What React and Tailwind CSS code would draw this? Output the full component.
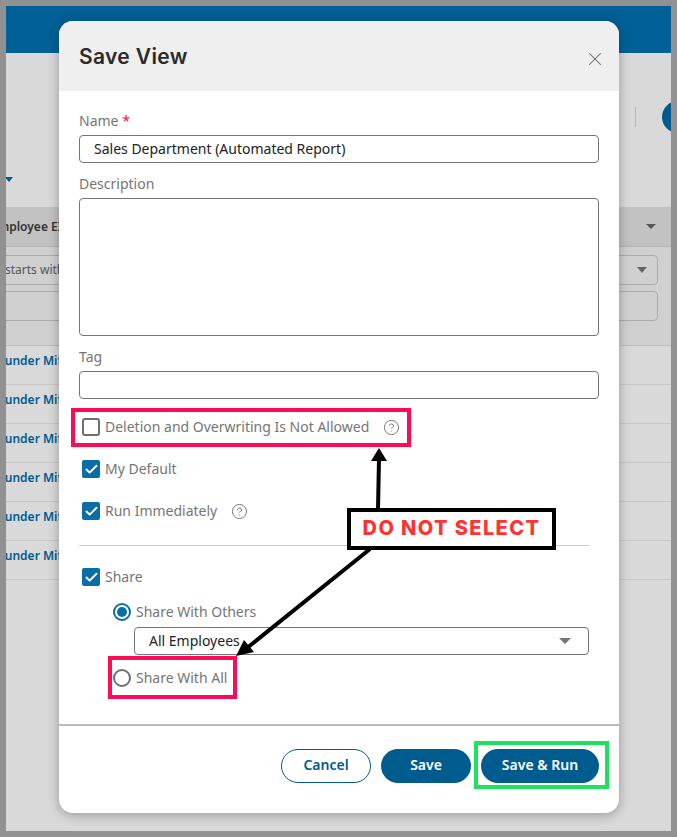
import { Check, CircleHelp, X } from "lucide-react";

const rows = [0, 1, 2, 3, 4, 5];

function CheckRow({ checked, label, help, className }) {
  return (
    <div className={`flex items-center ml-[3px] h-[18px] ${className}`}>
      {checked ? (
        <span className="flex items-center justify-center w-[18px] h-[18px] rounded-[2px] bg-[#0a6ea6]">
          <Check size={15} strokeWidth={3} className="text-white" />
        </span>
      ) : (
        <span className="w-[18px] h-[18px] rounded-[3px] border-2 border-[#6f6f6f] bg-white" />
      )}
      <span className="ml-[5px] -mt-[2px] text-[14px] text-[#757575]">{label}</span>
      {help && <CircleHelp size={17} strokeWidth={1.4} className="ml-[14px] text-[#757575]" />}
    </div>
  );
}

function RadioRow({ checked, label, className }) {
  return (
    <div className={`flex items-center ml-[34px] h-[18px] ${className}`}>
      {checked ? (
        <span className="flex items-center justify-center w-[18px] h-[18px] rounded-full border-2 border-[#0a6ea6] bg-white">
          <span className="w-[10px] h-[10px] rounded-full bg-[#0a6ea6]" />
        </span>
      ) : (
        <span className="w-[18px] h-[18px] rounded-full border-2 border-[#6f6f6f] bg-white" />
      )}
      <span className="ml-[5px] -mt-[2px] text-[14px] text-[#757575]">{label}</span>
    </div>
  );
}

// Page sitting behind the dialog
function Background() {
  return (
    <div className="relative h-full overflow-hidden bg-[#d9d9d9] font-['Noto_Sans',sans-serif]">
      <div className="h-[47px] bg-[#006097]" />
      <div className="relative h-[154px]">
        <span className="absolute left-0 top-[124px] w-0 h-0 border-x-[4px] border-x-transparent border-t-[5px] border-t-[#005b8e] ml-[-1px]" />
        <span className="absolute left-[629px] top-[54px] w-px h-[20px] bg-[#b5b5b5]" />
        <span className="absolute left-[656px] top-[48px] w-[32px] h-[32px] rounded-full bg-[#005b8e]" />
      </div>
      <div className="flex items-center justify-between h-[40px] pr-[15px] bg-[#c2c2c2] border-b border-[#b4b4b4]">
        <span className="ml-[-15px] text-[12px] font-semibold text-[#333]">Employee EID</span>
        <span className="w-0 h-0 border-x-[5px] border-x-transparent border-t-[5px] border-t-[#555]" />
      </div>
      <div className="h-[99px] pt-[8px] bg-[#d0d0d0] border-b border-[#bdbdbd]">
        <div className="flex items-center justify-between h-[30px] ml-[-20px] mr-[13px] pl-[18px] pr-[10px] border border-[#aaa] rounded-[4px]">
          <span className="text-[12px] text-[#555]">starts with</span>
          <span className="w-0 h-0 border-x-[5px] border-x-transparent border-t-[6px] border-t-[#666]" />
        </div>
        <div className="h-[30px] mt-[6px] ml-[-20px] mr-[13px] border border-[#aaa] rounded-[4px]" />
      </div>
      {rows.map((r) => (
        <div key={r} className="h-[39px] pt-[7px] border-b border-[#c6c6c6]">
          <div className="ml-[-10px] text-[12px] leading-[16px] font-semibold text-[#005b8e]">Dunder Mifflin</div>
        </div>
      ))}
    </div>
  );
}

function Dialog() {
  return (
    <div className="flex flex-col w-[560px] h-[792px] rounded-[14px] bg-white overflow-hidden shadow-[0_2px_12px_rgba(0,0,0,0.3)] font-['Noto_Sans',sans-serif]">
      <div className="flex items-center justify-between h-[70px] pl-[20px] pr-[13px] bg-[#efefef]">
        <h1 className="mt-[1px] text-[21px] tracking-[0.35px] font-semibold text-[#2b2b2b] font-['Inter',sans-serif]">Save View</h1>
        <X size={22} strokeWidth={1.1} className="mt-[5px] text-[#666]" />
      </div>

      <div className="flex-1 pt-[20px] pl-[20px] pr-[20px]">
        <div className="h-[20px] text-[14px] leading-[20px] text-[#757575]">
          Name <span className="text-[#ff0a54]">*</span>
        </div>
        <div className="flex items-center h-[28px] mt-[4px] pl-[14px] pb-[2px] border border-[#757575] rounded-[4px] text-[14px] text-[#222]">
          Sales Department (Automated Report)
        </div>
        <div className="h-[20px] mt-[11px] text-[14px] leading-[20px] text-[#757575]">Description</div>
        <div className="h-[138px] mt-[4px] border border-[#757575] rounded-[4px]" />
        <div className="h-[20px] mt-[11px] text-[14px] leading-[20px] text-[#757575]">Tag</div>
        <div className="h-[28px] mt-[4px] border border-[#757575] rounded-[4px]" />

        <CheckRow label="Deletion and Overwriting Is Not Allowed" help className="mt-[19px]" />
        <CheckRow checked label="My Default" className="mt-[24px]" />
        <CheckRow checked label="Run Immediately" help className="mt-[24px]" />

        <div className="w-[510px] h-px mt-[25px] bg-[#c9c9c9]" />

        <CheckRow checked label="Share" className="mt-[22px]" />
        <RadioRow checked label="Share With Others" className="mt-[17px]" />
        <div className="flex items-center justify-between w-[455px] h-[28px] ml-[55px] mt-[6px] pl-[14px] pr-[17px] border border-[#757575] rounded-[4px] text-[14px] text-[#222]">
          <span className="-mt-[2px]">All Employees</span>
          <span className="w-0 h-0 border-x-[6px] border-x-transparent border-t-[6px] border-t-[#757575]" />
        </div>
        <RadioRow label="Share With All" className="mt-[14px]" />
      </div>

      <div className="flex justify-end gap-[10px] h-[89px] pt-[23px] pr-[20px] border-t-2 border-[#bbbbbb]">
        <button className="w-[90px] h-[34px] pb-[3px] rounded-full border border-[#005b8e] bg-white text-[14px] font-semibold text-[#005b8e]">Cancel</button>
        <button className="w-[90px] h-[34px] pb-[3px] rounded-full bg-[#005b8e] text-[14px] font-semibold text-white">Save</button>
        <button className="w-[118px] h-[34px] pb-[3px] rounded-full bg-[#005b8e] text-[14px] font-semibold text-white">Save &amp; Run</button>
      </div>
    </div>
  );
}

// Red/green boxes, arrows and the callout drawn on top of the screenshot
function Annotations() {
  return (
    <>
      <div className="absolute left-[71px] top-[408px] w-[340px] h-[39px] border-4 border-[#ff0a54]" />
      <div className="absolute left-[108px] top-[656px] w-[129px] h-[43px] border-4 border-[#ff0a54]" />
      <div className="absolute left-[474px] top-[741px] w-[135px] h-[48px] border-4 border-[#1fe05f]" />
      <svg className="absolute left-0 top-0" width="677" height="837" viewBox="0 0 677 837">
        <path d="M378 510 L379 458" stroke="#000" strokeWidth="4" fill="none" />
        <path d="M379 448 L387 461 L371 461 Z" fill="#000" />
        <path d="M370 549 L247 648" stroke="#000" strokeWidth="4" fill="none" />
        <path d="M236 656 L244 640 L254 652 Z" fill="#000" />
      </svg>
      <div className="absolute left-[347px] top-[508px] flex items-center justify-center w-[209px] h-[42px] pb-[3px] border-4 border-black bg-white font-['Inter',sans-serif] text-[20px] tracking-[1.4px] font-extrabold text-[#ff3333]">
        DO NOT SELECT
      </div>
    </>
  );
}

export default function App() {
  return (
    <div className="relative w-[677px] h-[837px] p-[6px] bg-[#919191] overflow-hidden">
      <Background />
      <div className="absolute inset-0 pl-[59px] pt-[21px]">
        <Dialog />
      </div>
      <Annotations />
    </div>
  );
}
